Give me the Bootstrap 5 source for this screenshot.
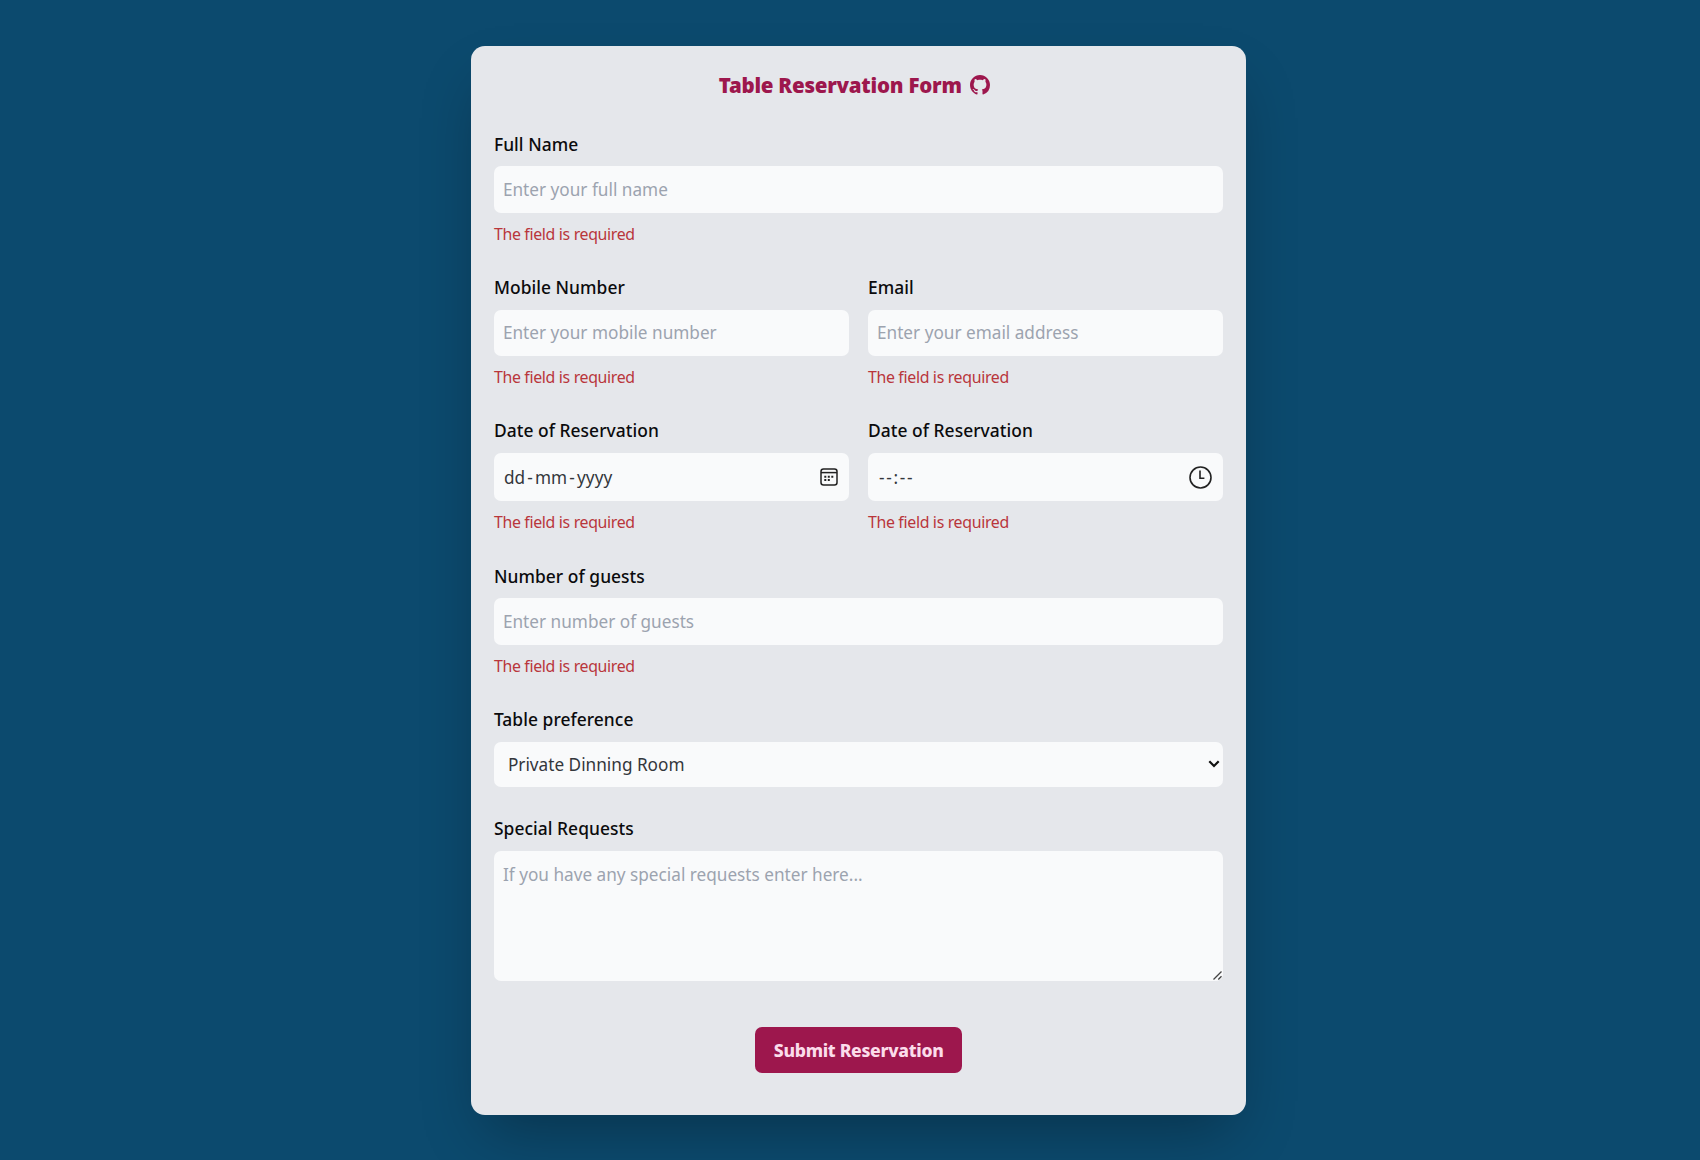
<!DOCTYPE html>
<html lang="en">
<head>
<meta charset="utf-8">
<meta name="viewport" content="width=device-width, initial-scale=1">
<title>Table Reservation Form</title>
<link href="https://cdn.jsdelivr.net/npm/bootstrap@5.3.0/dist/css/bootstrap.min.css" rel="stylesheet">
<style>
body{background:#0c4a6e;font-family:"Noto Sans","Open Sans",sans-serif;height:1160px;overflow:hidden;color:#0b0b0d}
main{padding-left:17.4px}
.panel{width:775.5px;height:1069px;margin-top:46px;padding:22.4px 23px 0;background:#e5e7eb;border-radius:14px;box-shadow:0 29px 58px -14px rgba(0,0,0,.3)}
.title{font-size:20.5px;line-height:34px;font-weight:900;color:#9d174d;margin-bottom:27.4px;padding-right:9px}
.t-title{letter-spacing:-.24px}
.title svg{width:20px;height:20px;margin-left:8px}
.lbl{display:block;font-size:17.4px;line-height:28px;font-weight:500;margin-bottom:8.6px;letter-spacing:.05px}
.field{display:block;width:100%;height:46.2px;background:#f9fafb;border:0;border-radius:7px;padding:0 9px;font-size:17.2px;color:#33363b;outline:0}
.field::placeholder{color:#9ca3af;opacity:1}
.field.tall{height:48.6px;padding:0 11px 0 10px}
.t-date,.t-time{padding-top:2px}
.t-date .sep{padding:0 2.2px}
.t-time{letter-spacing:1.7px;padding-left:1px}
.t-room{padding-top:2px}
.err{font-size:15.9px;line-height:24px;margin-top:9px;color:#b9363b;letter-spacing:-.34px}
.grp{margin-bottom:27.45px}
.pair{gap:18.6px}
.pair>*{flex:1 1 0}
.field.choice{height:45.4px;padding:0 3px 0 14px}
.area{height:129.5px;padding-top:11px;resize:none}
.grip{position:absolute;right:1px;bottom:1px;width:9px;height:9px}
.send{width:207px;height:46.2px;background:#9d174d;color:#fbdcea;border:0;border-radius:7px;font-size:17.6px;font-weight:800;letter-spacing:-.3px;margin-top:46.5px}
.send:hover{background:#831843;color:#fbdcea}
</style>
<script src="https://cdn.jsdelivr.net/npm/bootstrap@5.3.0/dist/js/bootstrap.bundle.min.js"></script>
</head>
<body>
<main class="d-flex justify-content-center">
<form class="panel flex-shrink-0" novalidate>
  <h1 class="title d-flex align-items-center justify-content-center"><span class="t-title">Table Reservation Form</span>
    <svg viewBox="0 0 16 16" fill="currentColor" aria-hidden="true"><path d="M8 0C3.58 0 0 3.58 0 8c0 3.54 2.29 6.53 5.47 7.59.4.07.55-.17.55-.38 0-.19-.01-.82-.01-1.49-2.01.37-2.53-.49-2.69-.94-.09-.23-.48-.94-.82-1.13-.28-.15-.68-.52-.01-.53.63-.01 1.08.58 1.23.82.72 1.21 1.87.87 2.33.66.07-.52.28-.87.51-1.07-1.78-.2-3.64-.89-3.64-3.95 0-.87.31-1.59.82-2.15-.08-.2-.36-1.02.08-2.12 0 0 .67-.21 2.2.82.64-.18 1.32-.27 2-.27s1.36.09 2 .27c1.53-1.04 2.2-.82 2.2-.82.44 1.1.16 1.92.08 2.12.51.56.82 1.27.82 2.15 0 3.07-1.87 3.75-3.65 3.95.29.25.54.73.54 1.48 0 1.07-.01 1.93-.01 2.2 0 .21.15.46.55.38A8.01 8.01 0 0 0 16 8c0-4.42-3.58-8-8-8z"/></svg>
  </h1>
  <div class="grp"><label class="lbl" for="name">Full Name</label><input id="name" class="field" placeholder="Enter your full name"><div class="err">The field is required</div></div>
  <div class="grp pair d-flex">
    <div><label class="lbl" for="mobile">Mobile Number</label><input id="mobile" class="field" placeholder="Enter your mobile number"><div class="err">The field is required</div></div>
    <div><label class="lbl" for="email">Email</label><input id="email" class="field" placeholder="Enter your email address"><div class="err">The field is required</div></div>
  </div>
  <div class="grp pair d-flex">
    <div><span class="lbl">Date of Reservation</span>
      <div class="field tall d-flex align-items-center justify-content-between"><span class="t-date">dd<span class="sep">-</span>mm<span class="sep">-</span>yyyy</span>
        <svg width="18" height="18" viewBox="0 0 18 18" fill="none" stroke="#222" stroke-width="1.5"><rect x="1" y="1" width="16" height="16" rx="2.5"/><path d="M1 4.6h16"/><g fill="#222" stroke="none"><path d="M4.3 7.8h2v2h-2zM7.8 7.8h2v2h-2zM11.3 7.8h2v2h-2zM4.3 11h2v2h-2zM7.8 11h2v2h-2z"/></g></svg></div>
      <div class="err">The field is required</div></div>
    <div><span class="lbl">Date of Reservation</span>
      <div class="field tall d-flex align-items-center justify-content-between"><span class="t-time">--:--</span>
        <svg width="23" height="23" viewBox="0 0 23 23" fill="none" stroke="#222" stroke-width="1.6"><circle cx="11.5" cy="11.5" r="10.5"/><path d="M11 4.5v7.8h4.4"/></svg></div>
      <div class="err">The field is required</div></div>
  </div>
  <div class="grp"><label class="lbl" for="guests">Number of guests</label><input id="guests" class="field" placeholder="Enter number of guests"><div class="err">The field is required</div></div>
  <div class="grp"><span class="lbl">Table preference</span>
    <div class="field choice d-flex align-items-center justify-content-between"><span class="t-room">Private Dinning Room</span>
      <svg width="12" height="8" viewBox="0 0 12 8" fill="none" stroke="#111" stroke-width="2.2"><path d="M1.3 1.3 6 6l4.7-4.7"/></svg></div></div>
  <div><label class="lbl" for="special">Special Requests</label>
    <div class="position-relative"><textarea id="special" class="field area" placeholder="If you have any special requests enter here..."></textarea>
      <svg class="grip" viewBox="0 0 9 9" stroke="#444" stroke-width="1.3" fill="none"><path d="M.5 8.5l8-8M5.3 8.5l3.2-3.2"/></svg></div></div>
  <div class="d-flex justify-content-center"><button type="button" class="send btn p-0">Submit Reservation</button></div>
</form>
</main>
</body>
</html>
